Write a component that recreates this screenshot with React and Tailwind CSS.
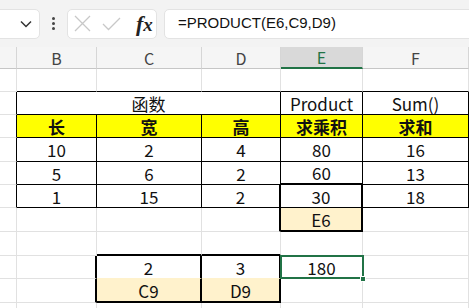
import React from 'react'

const COLS = 'grid grid-cols-[17px_80px_105px_79px_82px_106px]'
const FONT = { fontFamily: '"Noto Sans CJK SC", "Noto Sans", sans-serif' }

const g = 'border-r border-b border-[#e1e1e1]'

function Cell({ className = '', children }) {
    return (
        <div className={`flex items-center justify-center whitespace-nowrap leading-none ${className}`}>
            {children}
        </div>
    )
}

function Toolbar() {
    return (
        <div className="h-[47px] bg-[#f3f3f3] flex items-center relative">
            {/* name box */}
            <div className="h-[30px] w-[52px] -ml-[12px] bg-white border border-[#e3e3e3] rounded-[5px] flex items-center justify-end pr-[7px]">
                <svg width="12" height="8" viewBox="0 0 12 8">
                    <path d="M1 1.5 L6 6.5 L11 1.5" fill="none" stroke="#333" strokeWidth="1.5" />
                </svg>
            </div>
            <div className="w-[27px] flex flex-col items-center gap-[2px]">
                <span className="w-[3px] h-[3px] rounded-full bg-[#444]" />
                <span className="w-[3px] h-[3px] rounded-full bg-[#444]" />
                <span className="w-[3px] h-[3px] rounded-full bg-[#444]" />
            </div>
            {/* cancel / enter / fx */}
            <div className="h-[30px] w-[90px] bg-white border border-[#e3e3e3] rounded-[5px] flex items-center pl-[6px]">
                <svg width="17" height="17" viewBox="0 0 17 17">
                    <path d="M1 1 L16 16 M16 1 L1 16" stroke="#c8c8c8" strokeWidth="1.3" />
                </svg>
                <svg width="19" height="14" viewBox="0 0 19 14" className="ml-[11px]">
                    <path d="M1 7 L6.5 12.5 L18 1" fill="none" stroke="#c8c8c8" strokeWidth="1.3" />
                </svg>
                <span className="ml-[15px] text-[22px] italic font-bold text-[#222] leading-none" style={{ fontFamily: '"Liberation Serif", serif' }}>
                    f<span className="text-[19px]">x</span>
                </span>
            </div>
            <div className="h-[30px] flex-1 ml-[7px] -mr-[10px] bg-white border border-[#e3e3e3] rounded-[5px] flex items-center pl-[13px]">
                <span className="text-[15px] text-[#111]" style={{ fontFamily: '"Liberation Sans", Arial, sans-serif' }}>
                    =PRODUCT(E6,C9,D9)
                </span>
            </div>
        </div>
    )
}

function ColHeader() {
    const h = 'border-r border-[#d6d6d6] border-b border-b-[#c6c6c6] text-[#444]'
    return (
        <div className={`${COLS} h-[22px] bg-[#f5f5f5] text-[16px]`} style={FONT}>
            <Cell className={h} />
            <Cell className={h}>B</Cell>
            <Cell className={h}>C</Cell>
            <Cell className={h}>D</Cell>
            <Cell className="bg-[#d9d9d9] border-r border-[#d6d6d6] border-b-2 border-b-[#217346] text-[#217346]">E</Cell>
            <Cell className={h}>F</Cell>
        </div>
    )
}

export default function App() {
    const k = 'border-r border-b border-black'
    const yellow = 'bg-[#ffff00] font-bold'
    const tan = 'bg-[#fff2cc]'
    return (
        <div className="w-[469px] h-[308px] overflow-hidden bg-white">
            <Toolbar />
            <ColHeader />
            <div className="text-[17px] text-[#111]" style={FONT}>
                {/* row 1 */}
                <div className={`${COLS} h-[23px]`}>
                    <Cell className={g} />
                    <Cell className="border-r border-[#e1e1e1] border-b border-b-black" />
                    <Cell className="border-r border-[#e1e1e1] border-b border-b-black" />
                    <Cell className="border-r border-[#e1e1e1] border-b border-b-black" />
                    <Cell className="border-r border-[#e1e1e1] border-b border-b-black" />
                    <Cell className="border-r border-[#e1e1e1] border-b border-b-black" />
                </div>
                {/* row 2 */}
                <div className={`${COLS} h-[23px]`}>
                    <Cell className="border-r border-r-black border-b border-b-[#e1e1e1]" />
                    <Cell className={`${k} col-span-3`}>函数</Cell>
                    <Cell className={k}>Product</Cell>
                    <Cell className={k}>Sum()</Cell>
                </div>
                {/* row 3 */}
                <div className={`${COLS} h-[23px]`}>
                    <Cell className="border-r border-r-black border-b border-b-[#e1e1e1]" />
                    <Cell className={`${k} ${yellow}`}>长</Cell>
                    <Cell className={`${k} ${yellow}`}>宽</Cell>
                    <Cell className={`${k} ${yellow}`}>高</Cell>
                    <Cell className={`${k} ${yellow}`}>求乘积</Cell>
                    <Cell className={`${k} ${yellow}`}>求和</Cell>
                </div>
                {/* row 4 */}
                <div className={`${COLS} h-[24px]`}>
                    <Cell className="border-r border-r-black border-b border-b-[#e1e1e1]" />
                    <Cell className={k}>10</Cell>
                    <Cell className={k}>2</Cell>
                    <Cell className={k}>4</Cell>
                    <Cell className={k}>80</Cell>
                    <Cell className={k}>16</Cell>
                </div>
                {/* row 5 */}
                <div className={`${COLS} h-[23px]`}>
                    <Cell className="border-r border-r-black border-b border-b-[#e1e1e1]" />
                    <Cell className={k}>5</Cell>
                    <Cell className={k}>6</Cell>
                    <Cell className={k}>2</Cell>
                    <Cell className="border-r border-black border-b-2">60</Cell>
                    <Cell className={k}>13</Cell>
                </div>
                {/* row 6 */}
                <div className={`${COLS} h-[23px]`}>
                    <Cell className="border-r border-r-black border-b border-b-[#e1e1e1]" />
                    <Cell className={k}>1</Cell>
                    <Cell className={k}>15</Cell>
                    <Cell className="border-r-2 border-b border-black">2</Cell>
                    <Cell className="border-r-2 border-b border-black">30</Cell>
                    <Cell className={k}>18</Cell>
                </div>
                {/* row 7 */}
                <div className={`${COLS} h-[24px]`}>
                    <Cell className={g} />
                    <Cell className={g} />
                    <Cell className={g} />
                    <Cell className="border-r-2 border-r-black border-b border-b-[#e1e1e1]" />
                    <Cell className={`${tan} border-r-2 border-b-2 border-black`}>E6</Cell>
                    <Cell className={g} />
                </div>
                {/* row 8 */}
                <div className={`${COLS} h-[24px]`}>
                    <Cell className={g} />
                    <Cell className={g} />
                    <Cell className="border-r border-r-[#e1e1e1] border-b-2 border-b-black" />
                    <Cell className="border-r border-r-[#e1e1e1] border-b-2 border-b-black" />
                    <Cell className={g} />
                    <Cell className={g} />
                </div>
                {/* row 9 */}
                <div className={`${COLS} h-[23px]`}>
                    <Cell className={g} />
                    <Cell className="border-r-2 border-r-black border-b border-b-[#e1e1e1]" />
                    <Cell className="border-r-2 border-r-black border-b border-b-[#fff2cc]">2</Cell>
                    <Cell className="border-r-2 border-r-black border-b border-b-[#fff2cc]">3</Cell>
                    <div className={`${g} relative flex items-center justify-center leading-none`}>
                        180
                        <div className="absolute -left-[1px] -top-[1px] w-[84px] h-[24px] border-2 border-[#217346]" />
                        <div className="absolute -right-[4px] -bottom-[4px] w-[6px] h-[6px] bg-[#217346] border border-white" />
                    </div>
                    <Cell className={g} />
                </div>
                {/* row 10 */}
                <div className={`${COLS} h-[24px]`}>
                    <Cell className={g} />
                    <Cell className="border-r-2 border-r-black border-b border-b-[#e1e1e1]" />
                    <Cell className={`${tan} border-r-2 border-b-2 border-black`}>C9</Cell>
                    <Cell className={`${tan} border-r-2 border-b-2 border-black`}>D9</Cell>
                    <Cell className={g} />
                    <Cell className={g} />
                </div>
                {/* row 11 */}
                <div className={`${COLS} h-[24px]`}>
                    <Cell className={g} />
                    <Cell className={g} />
                    <Cell className={g} />
                    <Cell className={g} />
                    <Cell className={g} />
                    <Cell className={g} />
                </div>
            </div>
        </div>
    )
}
